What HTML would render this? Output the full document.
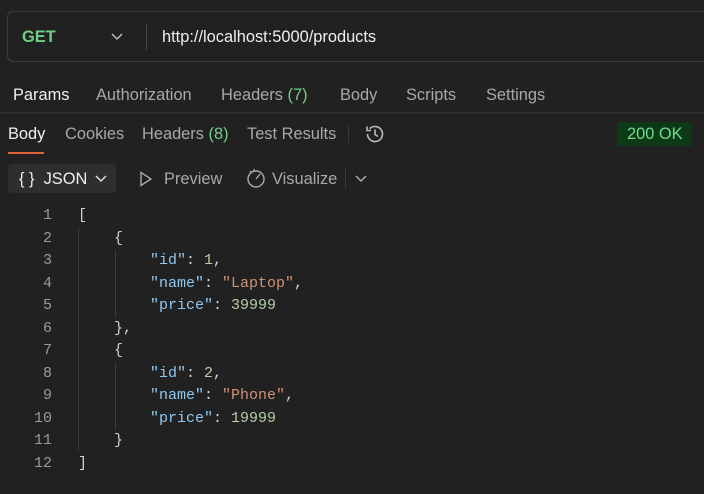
<!DOCTYPE html><html><head><style>
body{margin:0;width:704px;height:494px;background:#212121;font-family:"Liberation Sans",sans-serif;position:relative;overflow:hidden;color:#e6e6e6}
.a{position:absolute;white-space:pre}
.t{font-size:16.4px}
.url{position:absolute;left:7px;top:11px;width:720px;height:51px;border:1px solid #3c3c3c;border-radius:6px;box-sizing:border-box}
.code{font-family:"Liberation Mono",monospace;font-size:15px}
.k{color:#8fc8f0}.s{color:#ce9178}.n{color:#b5cea8}.p{color:#d4d4d4}.b{color:#d4d0c0}
.ln{color:#9a9a9a;text-align:right;width:30px;left:22px}
.g{color:#6fcf87}
</style></head><body>
<div class="url"></div>
<div class="a t" style="left:22px;top:28px;font-weight:bold;color:#6fcf87">GET</div>
<svg class="a" style="left:111px;top:33px" width="12" height="8"><path d="M1 1l5 5 5-5" stroke="#bbb" stroke-width="1.5" fill="none"/></svg>
<div class="a" style="left:146px;top:23px;width:1px;height:27px;background:#444"></div>
<div class="a t" style="left:162px;top:28px;color:#eee">http://localhost:5000/products</div>
<div class="a t" style="left:13px;top:86px;color:#f0f0f0">Params</div>
<div class="a t" style="left:96px;top:86px;color:#a8a8a8">Authorization</div>
<div class="a t" style="left:221px;top:86px;color:#a8a8a8">Headers <span class="g">(7)</span></div>
<div class="a t" style="left:340px;top:86px;color:#a8a8a8">Body</div>
<div class="a t" style="left:406px;top:86px;color:#a8a8a8">Scripts</div>
<div class="a t" style="left:486px;top:86px;color:#a8a8a8">Settings</div>
<div class="a" style="left:0;top:112px;width:704px;height:2px;background:#2e2e2e"></div>
<div class="a t" style="left:8px;top:125px;color:#f0f0f0">Body</div>
<div class="a" style="left:8px;top:152px;width:36px;height:2px;background:#e0643a"></div>
<div class="a t" style="left:65px;top:125px;color:#a8a8a8">Cookies</div>
<div class="a t" style="left:142px;top:125px;color:#a8a8a8">Headers <span class="g">(8)</span></div>
<div class="a t" style="left:247px;top:125px;color:#a8a8a8">Test Results</div>
<div class="a" style="left:348px;top:125px;width:1px;height:18px;background:#3a3a3a"></div>
<svg class="a" style="left:364px;top:124px" width="21" height="20" viewBox="0 0 21 20"><path d="M3.5 10a7.5 7.5 0 1 0 2.2-5.3M3 2.5v4h4M11 5.5v5l3 2" stroke="#bbb" stroke-width="1.6" fill="none"/></svg>
<div class="a" style="left:617px;top:122px;width:75px;height:24px;background:#0c3a17;border-radius:2px"></div>
<div class="a t" style="left:627px;top:125px;color:#6fdc8c">200 OK</div>
<div class="a" style="left:8px;top:164px;width:108px;height:29px;background:#2e2e2e;border-radius:4px"></div>
<div class="a t" style="left:19px;top:170px;color:#eee">{ }&nbsp; JSON</div>
<svg class="a" style="left:95px;top:175px" width="12" height="8"><path d="M1 1l5 5 5-5" stroke="#ddd" stroke-width="1.5" fill="none"/></svg>
<svg class="a" style="left:139px;top:171px" width="14" height="16"><path d="M2 1.5l10 6.5-10 6.5z" stroke="#aaa" stroke-width="1.4" fill="none"/></svg>
<div class="a t" style="left:164px;top:170px;color:#a8a8a8">Preview</div>
<svg class="a" style="left:245px;top:167px" width="22" height="22"><circle cx="11" cy="12" r="8" stroke="#aaa" stroke-width="1.4" fill="none"/><path d="M5 4l2 2M9 2v3M11 12l4-5" stroke="#aaa" stroke-width="1.4" fill="none"/></svg>
<div class="a t" style="left:272px;top:170px;color:#a8a8a8">Visualize</div>
<div class="a" style="left:345px;top:168px;width:1px;height:21px;background:#3a3a3a"></div>
<svg class="a" style="left:355px;top:175px" width="12" height="8"><path d="M1 1l5 5 5-5" stroke="#aaa" stroke-width="1.5" fill="none"/></svg>
<div class="a" style="left:78px;top:228px;width:1px;height:223px;background:#3c3c3c"></div>
<div class="a" style="left:115px;top:250px;width:1px;height:67px;background:#3c3c3c"></div>
<div class="a" style="left:115px;top:363px;width:1px;height:67px;background:#3c3c3c"></div>
<div class="code">
<div class="a ln" style="top:207px">1</div><div class="a ln" style="top:230px">2</div><div class="a ln" style="top:252px">3</div><div class="a ln" style="top:275px">4</div><div class="a ln" style="top:297px">5</div><div class="a ln" style="top:320px">6</div><div class="a ln" style="top:342px">7</div><div class="a ln" style="top:365px">8</div><div class="a ln" style="top:387px">9</div><div class="a ln" style="top:410px">10</div><div class="a ln" style="top:432px">11</div><div class="a ln" style="top:455px">12</div>
<div class="a b" style="left:78px;top:207px">[</div>
<div class="a b" style="left:114px;top:230px">{</div>
<div class="a" style="left:150px;top:252px"><span class="k">"id"</span><span class="p">: </span><span class="n">1</span><span class="p">,</span></div>
<div class="a" style="left:150px;top:275px"><span class="k">"name"</span><span class="p">: </span><span class="s">"Laptop"</span><span class="p">,</span></div>
<div class="a" style="left:150px;top:297px"><span class="k">"price"</span><span class="p">: </span><span class="n">39999</span></div>
<div class="a" style="left:114px;top:320px"><span class="b">}</span><span class="p">,</span></div>
<div class="a b" style="left:114px;top:342px">{</div>
<div class="a" style="left:150px;top:365px"><span class="k">"id"</span><span class="p">: </span><span class="n">2</span><span class="p">,</span></div>
<div class="a" style="left:150px;top:387px"><span class="k">"name"</span><span class="p">: </span><span class="s">"Phone"</span><span class="p">,</span></div>
<div class="a" style="left:150px;top:410px"><span class="k">"price"</span><span class="p">: </span><span class="n">19999</span></div>
<div class="a b" style="left:114px;top:432px">}</div>
<div class="a b" style="left:78px;top:455px">]</div>
</div>
</body></html>
